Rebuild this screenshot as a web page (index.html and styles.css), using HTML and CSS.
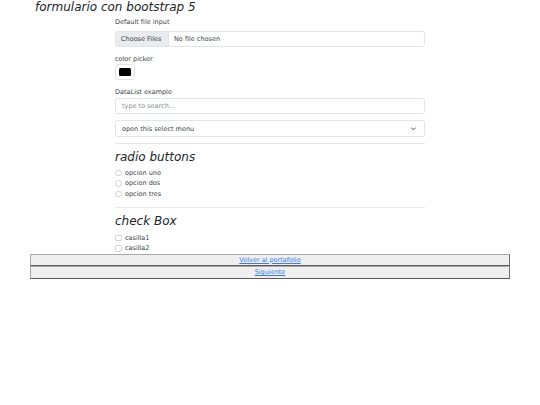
FILE: index.html
```html
<!DOCTYPE html>
<html lang="es">
<head>
<meta charset="utf-8">
<title>formulario con bootstrap 5</title>
<link rel="stylesheet" href="styles.css">
</head>
<body>
<h1 class="title">formulario con bootstrap 5</h1>
<main class="container">
  <div class="group first">
    <label class="form-label">Default file input</label>
    <div class="file-input">
      <span class="file-btn">Choose Files</span>
      <span class="file-name">No file chosen</span>
    </div>
  </div>
  <div class="group">
    <label class="form-label">color picker</label>
    <div class="color-input"><span class="swatch"></span></div>
  </div>
  <div class="group">
    <label class="form-label">DataList example</label>
    <div class="text-input placeholder">type to search...</div>
  </div>
  <div class="select">
    <span>open this select menu</span>
    <svg class="chev" width="5" height="4" viewBox="0 0 5 4"><path d="M0.6 0.9 L2.5 2.9 L4.4 0.9" fill="none" stroke="#343a40" stroke-width="0.9" stroke-linecap="round" stroke-linejoin="round"/></svg>
  </div>
  <hr class="sep">
  <h2 class="section">radio buttons</h2>
  <div class="options">
    <div class="option"><span class="radio"></span>opcion uno</div>
    <div class="option"><span class="radio"></span>opcion dos</div>
    <div class="option"><span class="radio"></span>opcion tres</div>
  </div>
  <hr class="sep sep2">
  <h2 class="section">check Box</h2>
  <div class="options checks">
    <div class="option"><span class="check"></span>casilla1</div>
    <div class="option"><span class="check"></span>casilla2</div>
  </div>
</main>
<nav class="footer">
  <div class="row"><a href="#">Volver al portafolio</a></div>
  <div class="row"><a href="#">Siguiente</a></div>
</nav>
</body>
</html>
```

FILE: styles.css
```css
html, body {
  margin: 0;
  padding: 0;
  background: #fff;
}
body {
  font-family: "DejaVu Sans", sans-serif;
  color: #3a3f44;
  font-size: 6.5px;
}
.title {
  margin: 0;
  padding-left: 35px;
  height: 14px;
  line-height: 14px;
  font-size: 12px;
  font-weight: normal;
  font-style: italic;
  color: #212529;
}
.container {
  width: 310px;
  margin: 0 auto;
}
.group {
  display: flex;
  flex-direction: column;
  margin-top: 8px;
}
.group.first {
  margin-top: 4px;
}
.form-label {
  display: block;
  height: 9px;
  line-height: 9px;
  font-size: 6.5px;
  color: #3a3f44;
}
.first .form-label {
  margin-bottom: 4px;
}
.file-input {
  display: flex;
  height: 16px;
  box-sizing: border-box;
  border: 1px solid #e2e5e8;
  border-radius: 2.5px;
  overflow: hidden;
  line-height: 14px;
}
.file-btn {
  background: #e9ecef;
  padding: 0 5px 0 5px;
  width: 53px;
  box-sizing: border-box;
  border-right: 1px solid #e2e5e8;
}
.file-name {
  padding-left: 5px;
}
.color-input {
  width: 20px;
  height: 16px;
  box-sizing: border-box;
  border: 1px solid #e2e5e8;
  border-radius: 2.5px;
  padding: 3px;
}
.swatch {
  display: block;
  width: 100%;
  height: 100%;
  background: #000;
  border-radius: 1.5px;
}
.text-input {
  margin-top: 1px;
  height: 16px;
  box-sizing: border-box;
  border: 1px solid #e2e5e8;
  border-radius: 2.5px;
  line-height: 14px;
  padding-left: 6px;
}
.placeholder {
  color: #868c92;
}
.select {
  margin-top: 6px;
  height: 17px;
  box-sizing: border-box;
  border: 1px solid #e2e5e8;
  border-radius: 2.5px;
  display: flex;
  align-items: center;
  justify-content: space-between;
  padding: 0 8px 0 6px;
}
.sep {
  border: 0;
  border-top: 1px solid #e6e7e8;
  margin: 6px 0 0 0;
}
.section {
  margin: 6px 0 0 0;
  height: 14px;
  line-height: 14px;
  font-size: 12px;
  font-weight: normal;
  font-style: italic;
  color: #212529;
}
.options {
  display: flex;
  flex-direction: column;
  margin-top: 3.5px;
}
.options.checks {
  margin-top: 5px;
}
.option {
  display: flex;
  align-items: center;
  height: 10.5px;
  font-size: 6.5px;
}
.radio, .check {
  width: 6.5px;
  height: 6.5px;
  box-sizing: border-box;
  border: 0.7px solid #cfd3d7;
  margin-right: 3.5px;
  background: #fff;
}
.radio {
  border-radius: 50%;
}
.check {
  border-radius: 1.3px;
}
.sep2 {
  margin-top: 7.5px;
}
.footer {
  width: 480px;
  margin: 0 auto;
}
.row {
  background: #efefef;
  height: 12.5px;
  box-sizing: border-box;
  border-style: solid;
  border-width: 1px;
  border-color: #a8a8a8 #707070 #5a5a5a #a8a8a8;
  display: flex;
  align-items: center;
  justify-content: center;
  font-size: 6.5px;
}
.row a {
  color: #3b7be6;
  text-decoration: underline;
}
```
